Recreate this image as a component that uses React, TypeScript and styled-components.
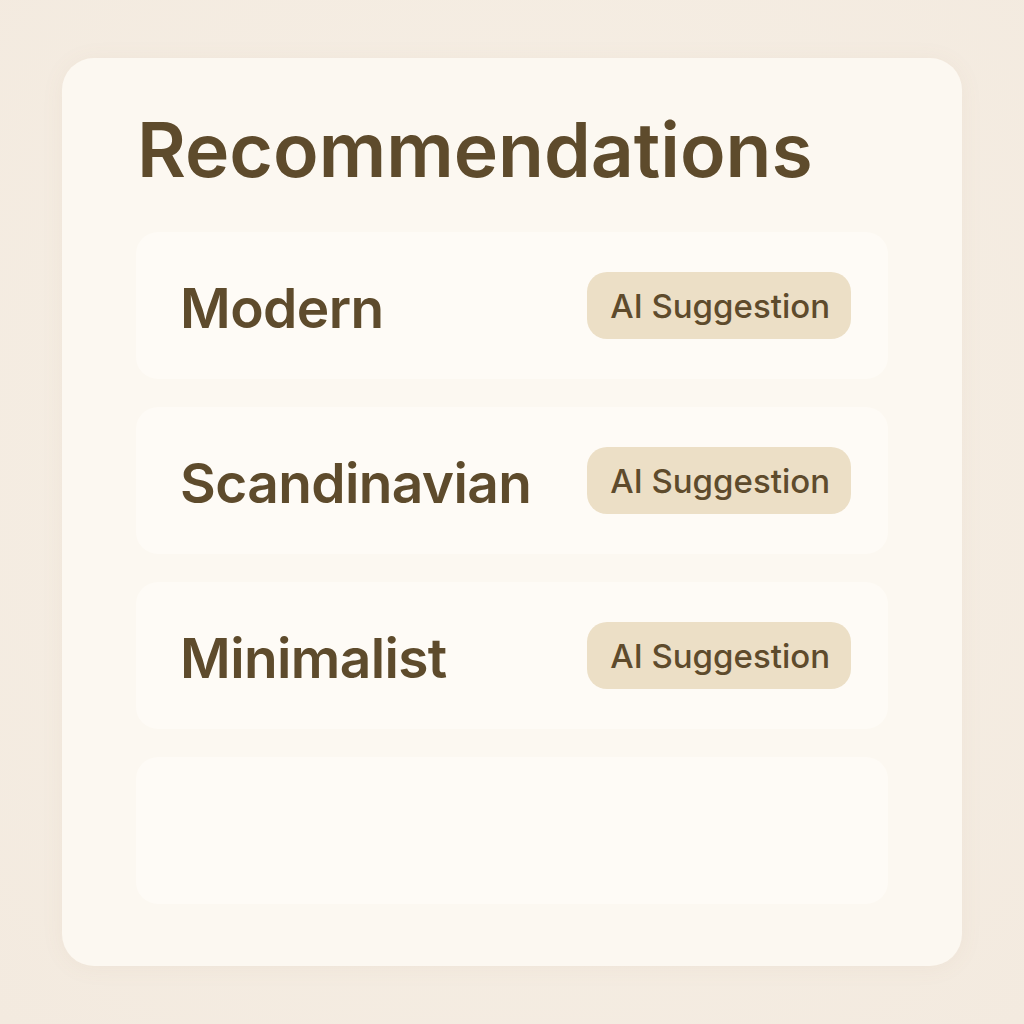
import React from 'react';
import styled, { createGlobalStyle } from 'styled-components';

const GlobalStyle = createGlobalStyle`
  html, body {
    margin: 0;
    padding: 0;
    background: #f4ece1;
  }
  body {
    font-family: Inter, "Noto Sans", sans-serif;
  }
`;

const styles = ['Modern', 'Scandinavian', 'Minimalist'];

const App: React.FC = () => {
  return (
    <>
      <GlobalStyle />
      <Page>
        <Card>
          <Title>Recommendations</Title>
          <List>
            {styles.map((name) => (
              <Row key={name}>
                <RowLabel>{name}</RowLabel>
                <Badge>AI Suggestion</Badge>
              </Row>
            ))}
            <Row />
          </List>
        </Card>
      </Page>
    </>
  );
};

const Page = styled.div`
  width: 1024px;
  height: 1024px;
  box-sizing: border-box;
  padding: 58px 62px;
  background: radial-gradient(circle at 50% 45%, #f7f0e6 0%, #f3eadf 100%);
`;

const Card = styled.section`
  width: 900px;
  height: 908px;
  box-sizing: border-box;
  padding: 47px 74px 61px;
  background: #fcf8f1;
  border-radius: 32px;
  box-shadow: 0 2px 24px rgba(150, 120, 80, 0.06);
  display: flex;
  flex-direction: column;
`;

const Title = styled.h1`
  margin: 0 0 0 1px;
  font-size: 75px;
  line-height: 90px;
  font-weight: 600;
  letter-spacing: 0;
  color: #5e4b2c;
`;

const List = styled.div`
  margin-top: 37px;
  display: flex;
  flex-direction: column;
  gap: 28px;
`;

const Row = styled.div`
  height: 147px;
  box-sizing: border-box;
  padding: 0 37px 0 44px;
  background: #fefbf6;
  border-radius: 22px;
  display: flex;
  align-items: center;
  justify-content: space-between;
`;

const RowLabel = styled.span`
  font-size: 55px;
  font-weight: 600;
  color: #5e4b2c;
  letter-spacing: -0.6px;
  transform: translateY(2px);
`;

const Badge = styled.span`
  height: 67px;
  box-sizing: border-box;
  padding: 0 21px 0 23px;
  display: inline-flex;
  align-items: center;
  background: #ecdfc6;
  border-radius: 20px;
  font-size: 33px;
  font-weight: 500;
  color: #5e4b2c;
`;

export default App;
